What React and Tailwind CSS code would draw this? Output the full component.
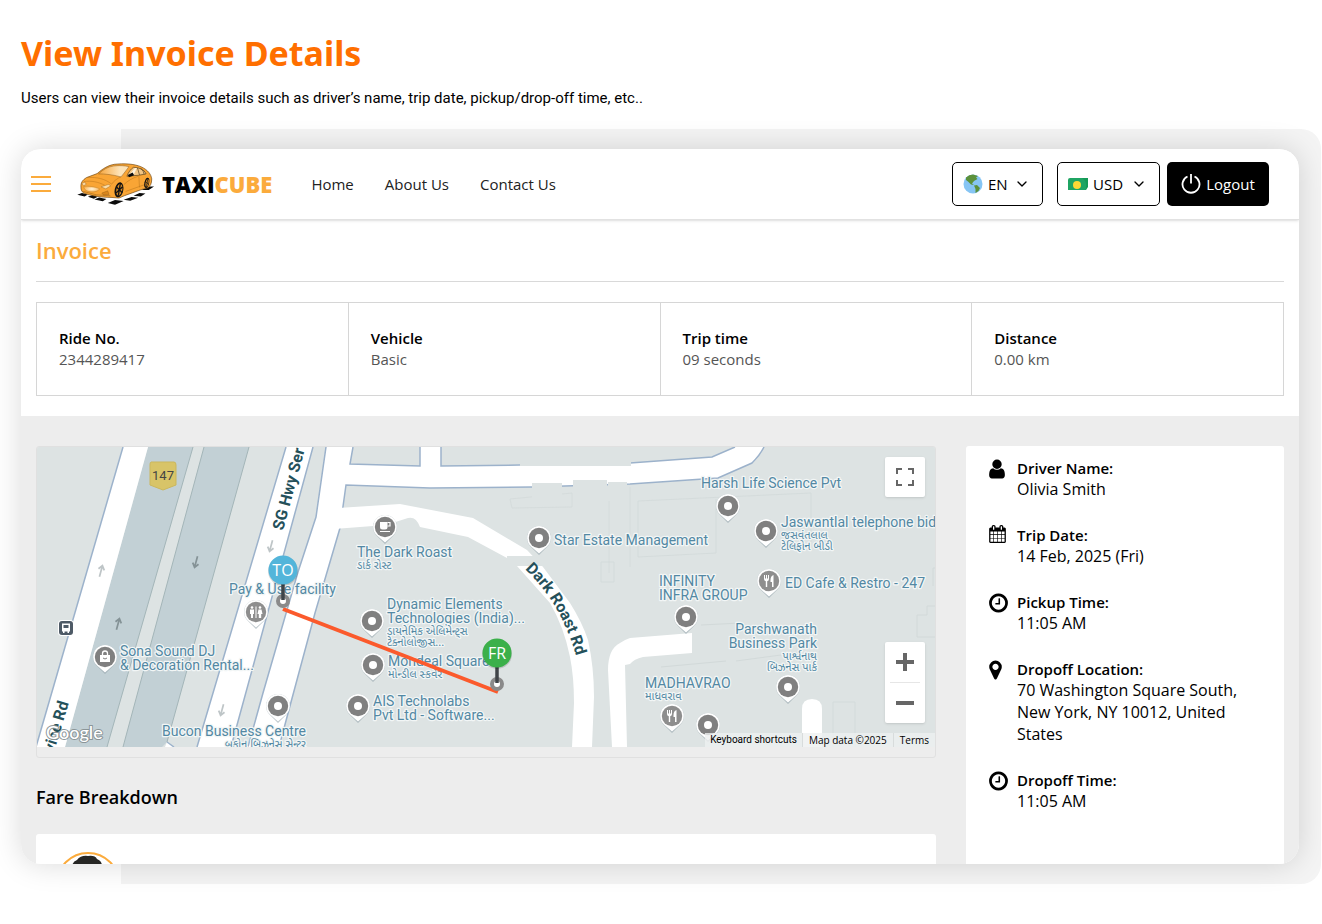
import React, { useState } from 'react';
import { ChevronDown } from 'lucide-react';

const rideFacts = [
  { label: 'Ride No.', value: '2344289417' },
  { label: 'Vehicle', value: 'Basic' },
  { label: 'Trip time', value: '09 seconds' },
  { label: 'Distance', value: '0.00 km' },
];

const icons = {
  user: {
    box: '256 0 1280 1792',
    className: 'h-[22px] w-4',
    d: 'M1536 1399q0 109-62.5 187t-150.5 78h-854q-88 0-150.5-78t-62.5-187q0-85 8.5-160.5t31.5-152 58.5-131 94-89 134.5-34.5q131 128 313 128t313-128q76 0 134.5 34.5t94 89 58.5 131 31.5 152 8.5 160.5zm-256-887q0 159-112.5 271.5t-271.5 112.5-271.5-112.5-112.5-271.5 112.5-271.5 271.5-112.5 271.5 112.5 112.5 271.5z',
  },
  calendar: {
    box: '64 0 1664 1792',
    className: 'h-[18px] w-[17px]',
    d: 'M192 1664h288v-288h-288v288zm352 0h320v-288h-320v288zm-352-352h288v-320h-288v320zm352 0h320v-320h-320v320zm-352-384h288v-288h-288v288zm736 736h320v-288h-320v288zm-384-736h320v-288h-320v288zm768 736h288v-288h-288v288zm-384-352h320v-320h-320v320zm-352-864v-288q0-13-9.5-22.5t-22.5-9.5h-64q-13 0-22.5 9.5t-9.5 22.5v288q0 13 9.5 22.5t22.5 9.5h64q13 0 22.5-9.5t9.5-22.5zm736 864h288v-320h-288v320zm-384-384h320v-288h-320v288zm384 0h288v-288h-288v288zm32-480v-288q0-13-9.5-22.5t-22.5-9.5h-64q-13 0-22.5 9.5t-9.5 22.5v288q0 13 9.5 22.5t22.5 9.5h64q13 0 22.5-9.5t9.5-22.5zm384-64v1280q0 52-38 90t-90 38h-1408q-52 0-90-38t-38-90v-1280q0-52 38-90t90-38h128v-96q0-66 47-113t113-47h64q66 0 113 47t47 113v96h384v-96q0-66 47-113t113-47h64q66 0 113 47t47 113v96h128q52 0 90 38t38 90z',
  },
  clock: {
    box: '128 0 1536 1792',
    className: 'h-[22px] w-[19px]',
    d: 'M1024 544v448q0 14-9 23t-23 9h-320q-14 0-23-9t-9-23v-64q0-14 9-23t23-9h224v-352q0-14 9-23t23-9h64q14 0 23 9t9 23zm416 352q0-148-73-273t-198-198-273-73-273 73-198 198-73 273 73 273 198 198 273 73 273-73 198-198 73-273zm224 0q0 209-103 385.5t-279.5 279.5-385.5 103-385.5-103-279.5-279.5-103-385.5 103-385.5 279.5-279.5 385.5-103 385.5 103 279.5 279.5 103 385.5z',
  },
  marker: {
    box: '256 0 1024 1792',
    className: 'h-[22px] w-[13px]',
    d: 'M1024 640q0 106-75 181t-181 75-181-75-75-181 75-181 181-75 181 75 75 181zm256 0q0 109-33 179l-364 774q-16 33-47.5 52t-67.5 19-67.5-19-46.500-52l-365-774q-33-70-33-179 0-212 150-362t362-150 362 150 150 362z',
  },
};

const tripDetails = [
  { icon: 'user', label: 'Driver Name:', value: 'Olivia Smith' },
  { icon: 'calendar', label: 'Trip Date:', value: '14 Feb, 2025 (Fri)' },
  { icon: 'clock', label: 'Pickup Time:', value: '11:05 AM' },
  { icon: 'marker', label: 'Dropoff Location:', value: '70 Washington Square South, New York, NY 10012, United States' },
  { icon: 'clock', label: 'Dropoff Time:', value: '11:05 AM' },
];

// Places on the map: pin position and label lines
const places = [
  { x: 349, y: 80, kind: 'cup', tx: 321, ty: 110, lines: ['The Dark Roast'], local: ['ડાર્ક રોસ્ટ'] },
  { x: 503, y: 91, tx: 518, ty: 98, lines: ['Star Estate Management'] },
  { x: 692, y: 59, tx: 665, ty: 41, lines: ['Harsh Life Science Pvt'] },
  { x: 730, y: 84, tx: 745, ty: 80, lines: ['Jaswantlal telephone bid'], local: ['જસવંતલાલ', 'ટેલિફોન બીડી'] },
  { x: 733, y: 134, kind: 'food', tx: 749, ty: 141, lines: ['ED Cafe & Restro - 247'] },
  { x: 650, y: 170, tx: 623, ty: 139, lines: ['INFINITY', 'INFRA GROUP'] },
  { x: 752, y: 240, tx: 781, ty: 187, end: true, lines: ['Parshwanath', 'Business Park'], local: ['પાર્શ્વનાથ', 'બિઝનેસ પાર્ક'] },
  { x: 636, y: 269, kind: 'food', tx: 609, ty: 241, lines: ['MADHAVRAO'], local: ['માધવરાવ'] },
  { x: 672, y: 278, lines: [] },
  { x: 336, y: 174, tx: 351, ty: 162, lines: ['Dynamic Elements', 'Technologies (India)...'], local: ['ડાયનેમિક એલિમેન્ટ્સ', 'ટેક્નોલોજીસ...'] },
  { x: 337, y: 218, tx: 352, ty: 219, lines: ['Mondeal Square'], local: ['મોન્ડીલ સ્કવેર'] },
  { x: 322, y: 259, tx: 337, ty: 259, lines: ['AIS Technolabs', 'Pvt Ltd - Software...'] },
  { x: 242, y: 259, tx: 270, ty: 289, end: true, lines: ['Bucon Business Centre'], local: ['બુકોન બિઝનેસ સેન્ટર'] },
  { x: 220, y: 165, kind: 'rest', tx: 193, ty: 147, lines: ['Pay & Use facility'] },
  { x: 69, y: 210, kind: 'bag', tx: 84, ty: 209, lines: ['Sona Sound DJ', '& Decoration Rental...'] },
];

const Pin = ({ x, y, kind }) => (
  <g transform={`translate(${x} ${y})`}>
    <path d="M0 17 L-8 9 A12 12 0 1 1 8 9 Z" fill="#8fa0a8" opacity="0.6" />
    <path d="M0 15.5 L-8 8.500 A11.800 11.800 0 1 1 8 8.500 Z" fill="#fff" />
    <circle r="10.200" fill={kind === 'rest' || kind === 'food' ? '#8e8e8e' : '#808080'} />
    {!kind && <circle r="4" fill="#fff" />}
    {kind === 'cup' && (
      <g>
        <path d="M-5-5H2.500V0Q2.500 2.500 0 2.500H-2.500Q-5 2.500-5 0Z" fill="#fff" />
        <path d="M2.500-4.500H5V-1H2.500M-5 4.500H5" fill="none" stroke="#fff" strokeWidth="1.200" />
      </g>
    )}
    {kind === 'food' && (
      <g fill="#fff">
        <path d="M-5-6v4q0 2 1.800 2.300V6h1.400V.3Q0 0 0-2V-6h-1v3.500h-1V-6h-1v3.500h-1V-6z" />
        <path d="M4.500-6Q1.500-5 1.500-1V1H3V6h1.500z" />
      </g>
    )}
    {kind === 'rest' && (
      <g fill="#fff">
        <circle cx="-4" cy="-4.500" r="1.300" />
        <circle cx="4" cy="-4.500" r="1.300" />
        <path d="M-6-2.500h4V2h-1v4h-2V2h-1zM2.500-2.500h3L6.500 2H5.200v4H2.800V2H1.500zM-.5-5.500h1V6h-1z" />
      </g>
    )}
    {kind === 'bag' && (
      <g>
        <path d="M-5-2H5V5H-5Z" fill="#fff" />
        <path d="M-2.500-2V-3.500A2.500 2.500 0 0 1 2.500-3.500V-2" fill="none" stroke="#fff" strokeWidth="1.300" />
        <path d="M-2 1Q0 3 2 1" fill="none" stroke="#808080" />
      </g>
    )}
  </g>
);

const Arrow = ({ x, y, down, faint }) => (
  <g transform={`translate(${x} ${y}) rotate(${down ? 195 : 15})`} opacity={faint ? 0.5 : 0.9}>
    <path d="M0 6V-5M-3-1.500L0-5.500L3-1.500" fill="none" stroke="#7d8b8f" strokeWidth="1.700" />
  </g>
);

const RouteStop = ({ x, y, color, text, ring }) => (
  <g>
    <circle cx={x} cy={ring} r="5" fill="#fff" stroke="#8a8a8a" strokeWidth="4" />
    <path d={`M${x} ${y + 12}V${ring - 1}`} stroke="#3f4448" strokeWidth="3.500" />
    <circle cx={x} cy={y + 1} r="15" fill="#000" opacity="0.15" />
    <circle cx={x} cy={y} r="14.500" fill={color} />
    <text x={x} y={y + 6} textAnchor="middle" className="fill-white font-['Open_Sans'] text-[16px]">{text}</text>
  </g>
);

const TripMap = () => (
  <svg viewBox="1 0 898 300" preserveAspectRatio="xMinYMin slice" className="block h-[300px] w-full" role="img" aria-label="Trip map">
    <rect width="1600" height="300" fill="#dde3e3" />

    {/* buildings */}
    <g fill="none" stroke="#d2d9d9">
      <path d="M602 54L775 46V95M602 54V110L680 106V52M565 115h13v20h-13zM797 255h22v45M797 255v45" opacity="0.8" />
      <path d="M665 178L705 176M625 220L690 214M700 214L745 208M900 121h-3v18M891 159h9M881 168h10v-9M881 168v22h19" />
      <path d="M474 52l62-6v14l-60 1zM573 40v86M594 40v80" opacity="0.7" />
    </g>

    {/* highway */}
    <path d="M112 0H157L71 300H29Z" fill="#c2d0d5" />
    <path d="M168 0H213L131 295L126 300H87Z" fill="#c2d0d5" />
    <path d="M157 0L71 300M168 0L87 300M213 0L131 295" fill="none" stroke="#a3b5b8" />
    <path d="M87 0H112L29 300H0Z" fill="#fff" />
    <path d="M87 0L0 300" stroke="#9cb2cb" strokeWidth="1.500" />
    <path d="M131 295L138 300H129Z" fill="#fff" />
    <path d="M131 295L138 300" stroke="#9cb2cb" strokeWidth="1.500" />

    {/* service roads */}
    <path d="M250 0H277L195 300H161Z" fill="#fff" />
    <path d="M250 0L161 300M277 0L195 300" stroke="#9cb2cb" strokeWidth="1.500" />
    <path d="M290 0L280 70L262 125L227 246L212 300H243L251 270L279 166L304 81L310 38L394 41L496 40L594 37L682 31L716 16Q724 8 728 0H699L676 10L594 16L484 18L405 19V0H384V19L314 17L317 0Z" fill="#fff" />
    <path d="M290 0L280 70L262 125L227 246L212 300M243 300L251 270L279 166L304 81L310 38L394 41L496 40L594 37L682 31L716 16Q724 8 728 0M699 0L676 10L594 16L484 18L405 19V0M384 0V19L314 17L317 0" fill="none" stroke="#9cb2cb" strokeWidth="1.500" />
    <path d="M302 61L364 57L437 71L491 103L507 120L534 156Q546 175 552 193Q558 220 558 250L556 300H536L538 256Q538 230 534 210Q528 180 514 156L481 119L471 111L432 90L384 80Q380 69 372 71L350 78L298 82Z" fill="#fff" />
    <path d="M576 300L572 223Q572 202 584 196Q588 193 594 191L656 186V206L607 210Q598 212 594 217L589 218L591 300Z" fill="#fff" />
    <path d="M766 300V262Q766 252 776 252T786 262V300Z" fill="#fff" />
    <path d="M484 0H595V19H484ZM496 36H526V54H496ZM537 33H571V54H537ZM572 35H591V54H572ZM471 109H507V119H471Z" fill="#dde3e3" />

    <Arrow x={65} y={124} faint />
    <Arrow x={82} y={177} />
    <Arrow x={160} y={115} down />
    <Arrow x={235} y={99} down faint />
    <Arrow x={186} y={263} down faint />

    {/* road names */}
    <g className="fill-[#24505a] font-['Roboto'] text-[16px] font-bold">
      <text transform="translate(247 84) rotate(-75)">SG Hwy Ser</text>
      <text transform="translate(33 256) rotate(-73)" textAnchor="end">Service Rd</text>
      <path id="dark-roast-rd" d="M489 122Q527 158 542 216" fill="none" />
      <text><textPath href="#dark-roast-rd">Dark Roast Rd</textPath></text>
    </g>

    {/* highway shield and bus stop */}
    <path d="M115 15H138Q140 15 140 18V38L127 43L114 38V18Q114 15 115 15Z" fill="#d8c468" stroke="#cbb75c" />
    <text x="127" y="33" textAnchor="middle" className="fill-[#444] font-['Roboto'] text-[13px]">147</text>
    <rect x="22" y="173" width="16" height="16" rx="4" fill="#fff" />
    <rect x="23" y="174" width="14" height="14" rx="3" fill="#4e5a66" />
    <path d="M26 176.500H34V184.500H33V186H31.500V184.500H28.500V186H27V184.500H26Z" fill="#fff" />
    <path d="M27.500 178H32.500V181H27.500Z" fill="#4e5a66" />

    {places.map((p) => (
      <g key={`${p.x}-${p.y}`}>
        <Pin x={p.x} y={p.y} kind={p.kind} />
        <g
          textAnchor={p.end ? 'end' : 'start'}
          stroke="#f2f6f6"
          strokeWidth="2.500"
          strokeLinejoin="round"
          paintOrder="stroke"
          className="fill-[#5388a3]"
        >
          {p.lines.map((line, i) => (
            <text key={line} x={p.tx} y={p.ty + i * 14} className="font-['Roboto'] text-[14px]">{line}</text>
          ))}
          {p.local?.map((line, i) => (
            <text key={line} x={p.tx} y={p.ty + p.lines.length * 14 - 2 + i * 11} className="font-['Noto_Sans_Gujarati','Noto_Sans',sans-serif] text-[11px]">{line}</text>
          ))}
        </g>
      </g>
    ))}

    <path d="M247 162L462 245" stroke="#fb5a2c" strokeWidth="4" />
    <RouteStop x={247} y={123} ring={154} color="#53b5da" text="TO" />
    <RouteStop x={461} y={206} ring={237} color="#3bb04a" text="FR" />

    <text x="10" y="292" fill="#fff" stroke="#8b9598" strokeWidth="2" paintOrder="stroke" className="font-['Lato'] text-[18px] font-medium">Google</text>
  </svg>
);

const CarLogo = () => (
  <svg viewBox="20 22 240 130" className="h-[43px] w-20" aria-hidden="true">
    <defs>
      <linearGradient id="windshield" x1="0" x2="1">
        <stop offset="0" stopColor="#f7a53a" />
        <stop offset="0.7" stopColor="#fde3b8" />
      </linearGradient>
      <radialGradient id="bumper">
        <stop offset="0" stopColor="#fff8e6" />
        <stop offset="1" stopColor="#f9b455" />
      </radialGradient>
    </defs>
    <path d="M20 118L34 113L52 117L42 123ZM72 132L86 126L108 131L97 138ZM112 143L134 134L160 137L134 148ZM160 133L184 125L204 127L180 136ZM190 121L208 113L226 114L212 123ZM214 104L236 93L252 93L236 104ZM52 124L66 119L82 124L70 130Z" fill="#0b0b0b" />
    <path d="M31 95C30 82 35 74 48 66L80 54C98 38 114 29 132 26C160 23 192 24 214 34C233 43 243 56 245 70C245 84 241 92 233 97L212 103L162 121L146 128L122 126C92 126 60 121 40 113C32 108 31 102 31 95Z" fill="#f9a535" stroke="#6a4310" strokeWidth="2" />
    <path d="M84 55C98 41 114 33 130 31C148 29 164 30 176 33C168 44 160 55 152 64C126 57 104 55 84 55Z" fill="url(#windshield)" stroke="#6a4310" strokeWidth="1.200" />
    <path d="M170 62C174 50 182 40 190 35C200 35 212 38 222 46L228 55L206 59Z" fill="#f3c685" stroke="#3a2a10" strokeWidth="1.800" />
    <path d="M178 57L194 37L200 37L190 59Z" fill="#fff3dc" />
    <path d="M202 37L208 58M212 38Q221 46 222 56" fill="none" stroke="#3a2a10" strokeWidth="1.800" />
    <path d="M173 58L187 51L192 59L176 65Z" fill="#0b0b0b" />
    <path d="M50 66C80 64 104 70 124 86C130 76 142 68 152 64M160 88C172 76 186 68 204 62M40 78C62 75 84 79 104 90M166 108L222 88M206 60L208 96" fill="none" stroke="#b8741a" strokeWidth="1.500" />
    <path d="M40 93C52 90 74 94 88 100C82 109 68 111 54 108C44 105 39 99 40 93Z" fill="url(#bumper)" stroke="#a56a1b" />
    <path d="M34 84L42 80L47 86L39 91ZM92 94L114 87L121 91L106 100Z" fill="#fbdca6" stroke="#7a4d14" />
    <path d="M94 113L112 106L116 117L99 119Z" fill="#d9861c" stroke="#7a4d14" />
    <path d="M38 108Q76 122 120 121" fill="none" stroke="#8a5714" strokeWidth="1.500" />
    <ellipse cx="146" cy="103" rx="13" ry="23" fill="#121212" transform="rotate(12 146 103)" />
    <ellipse cx="147" cy="103" rx="9" ry="18" fill="#d78a25" transform="rotate(12 147 103)" />
    <path d="M150 85L144 121M138 94L156 112M157 94L137 113" stroke="#121212" strokeWidth="4" />
    <ellipse cx="230" cy="82" rx="7" ry="16" fill="#121212" transform="rotate(12 230 82)" />
    <ellipse cx="231" cy="82" rx="4.500" ry="12" fill="#d78a25" transform="rotate(12 231 82)" />
    <path d="M233 70L229 94M226 78L236 87" stroke="#121212" strokeWidth="2" />
  </svg>
);

const GlobeIcon = () => (
  <svg viewBox="0 0 20 20" className="h-5 w-5 shrink-0" aria-hidden="true">
    <circle cx="10" cy="10" r="9.500" fill="#86c5f4" />
    <path d="M3 3.500Q6 .8 10 .6L15 2L13 3.500L14.500 5L11 7L9 9.500L11 11L8 10.500L5 7.500L3 6Z" fill="#5c913b" />
    <path d="M11 11.500L14 11L17 14L15.500 17L12.500 19L12.500 15Z" fill="#5c913b" />
  </svg>
);

const CashIcon = () => (
  <svg viewBox="0 0 20 12" className="h-3 w-5 shrink-0" aria-hidden="true">
    <path d="M2 0H20V9L18 12H2Z" fill="#159a57" />
    <path d="M0 2Q0 0 2 0H14Q18 3 18 6V12H0Z" fill="#1fa463" />
    <circle cx="9" cy="7" r="4" fill="#fdd835" />
  </svg>
);

const HeaderSelect = ({ id, label, icon, value, onChange, options, width }) => (
  <div className={`relative flex h-11 items-center rounded-[5px] border border-black pl-2.5 ${width}`}>
    <label htmlFor={id} className="sr-only">{label}</label>
    {icon}
    <select
      id={id}
      value={value}
      onChange={(e) => onChange(e.target.value)}
      className="h-full min-w-0 flex-1 appearance-none bg-transparent pl-[5px] font-medium text-black outline-none"
    >
      {options.map((o) => <option key={o}>{o}</option>)}
    </select>
    <ChevronDown className="pointer-events-none absolute right-3 h-4 w-4" />
  </div>
);

const Header = () => {
  const [lang, setLang] = useState('EN');
  const [currency, setCurrency] = useState('USD');

  return (
    <header className="flex h-[71px] items-center border-b border-[#e2e2e2] bg-white pr-[30px] pl-2.5 text-[15px] shadow-sm">
      <button type="button" aria-label="Menu" className="flex w-5 flex-col gap-[5px]">
        <span className="h-0.5 bg-[#fbab3c]" />
        <span className="h-0.5 bg-[#fbab3c]" />
        <span className="h-0.5 bg-[#fbab3c]" />
      </button>
      <a href="#home" className="ml-[26px] flex items-center gap-[5px]">
        <CarLogo />
        <span className="text-[22px] leading-8 font-extrabold text-black">TAXI<span className="text-[#fbab3c]">CUBE</span></span>
      </a>
      <nav className="ml-[39px] flex gap-[31px] font-medium text-[#222]">
        <a href="#home">Home</a>
        <a href="#about">About Us</a>
        <a href="#contact">Contact Us</a>
      </nav>
      <div className="ml-auto flex items-center">
        <HeaderSelect id="lang" label="Language" icon={<GlobeIcon />} value={lang} onChange={setLang} options={['EN', 'FR']} width="w-[91px]" />
        <div className="ml-3.5">
          <HeaderSelect id="currency" label="Currency" icon={<CashIcon />} value={currency} onChange={setCurrency} options={['USD', 'EUR']} width="w-[103px]" />
        </div>
        <button type="button" className="ml-[7px] flex h-11 w-[102px] items-center justify-center gap-[5px] rounded-[5px] bg-black font-medium text-white">
          <svg viewBox="0 0 20 20" className="h-5 w-5" fill="none" stroke="currentColor" strokeWidth="1.800" aria-hidden="true">
            <path d="M6.500 2.500A8.500 8.500 0 1 0 13.500 2.500M10 0V9.500" />
          </svg>
          Logout
        </button>
      </div>
    </header>
  );
};

const DetailIcon = ({ name }) => {
  const { box, d, className } = icons[name];
  return (
    <svg viewBox={box} className={className} fill="currentColor" fillRule="evenodd" aria-hidden="true">
      <path d={d} />
    </svg>
  );
};

export default function App() {
  return (
    <div className="bg-white pt-8 pr-px pb-10 pl-[21px] font-['Open_Sans',sans-serif] text-black">
      <h1 className="font-['Noto_Sans',sans-serif] text-[34px] leading-[42px] font-bold text-[#ff6f00]">View Invoice Details</h1>
      <p className="mt-3 font-['Roboto',sans-serif] text-[15px] leading-6">
        Users can view their invoice details such as driver&rsquo;s name, trip date, pickup/drop-off time, etc..
      </p>

      <div className="mt-[19px] grid">
        <div className="col-start-1 row-start-1 ml-[100px] rounded-r-[20px] bg-[#f4f4f4]" />
        <main className="z-10 col-start-1 row-start-1 my-5 mr-[22px] overflow-hidden rounded-[20px] bg-white shadow-[0_0_30px_rgba(0,0,0,0.15)]">
          <Header />

          <section className="px-[15px] pb-5">
            <h2 className="border-b border-[#d9d9d9] pt-3.5 pb-[15px] text-[22px] leading-8 font-semibold text-[#fbab3c]">Invoice</h2>
            <dl className="mt-5 grid grid-cols-4 border-y border-r border-[#d6d6d6] text-[15px] leading-[21px]">
              {rideFacts.map((f) => (
                <div key={f.label} className="border-l border-[#d6d6d6] px-[22px] py-[25px]">
                  <dt className="font-semibold">{f.label}</dt>
                  <dd className="text-[#555]">{f.value}</dd>
                </div>
              ))}
            </dl>
          </section>

          <section className="grid grid-cols-[minmax(0,1fr)_318px] gap-[30px] bg-[#ededed] px-[15px] pt-[30px]">
            <div>
              <div className="relative overflow-hidden rounded-[3px] border border-[#e0e0e0] pb-2.5">
                <TripMap />
                <button type="button" aria-label="Toggle fullscreen view" className="absolute top-2.5 right-2.5 flex h-10 w-10 items-center justify-center rounded-[2px] bg-white shadow">
                  <svg viewBox="0 0 18 18" className="h-[18px] w-[18px]" fill="none" stroke="#666" strokeWidth="2">
                    <path d="M1 6V1H6M12 1H17V6M17 12V17H12M6 17H1V12" />
                  </svg>
                </button>
                <div className="absolute right-2.5 bottom-[34px] w-10 rounded-[2px] bg-white shadow">
                  <button type="button" aria-label="Zoom in" className="flex h-10 w-10 items-center justify-center">
                    <svg viewBox="0 0 18 18" className="h-[18px] w-[18px]" stroke="#666" strokeWidth="4"><path d="M0 9H18M9 0V18" /></svg>
                  </button>
                  <div className="mx-[5px] h-px bg-[#e6e6e6]" />
                  <button type="button" aria-label="Zoom out" className="flex h-10 w-10 items-center justify-center">
                    <svg viewBox="0 0 18 18" className="h-[18px] w-[18px]" stroke="#666" strokeWidth="4"><path d="M0 9H18" /></svg>
                  </button>
                </div>
                <div className="absolute right-0 bottom-2.5 flex divide-x divide-[#d8dcdc] bg-[#eef0f0]/80 text-[10px] leading-[14px]">
                  <button type="button" className="px-[5px] font-['Roboto']">Keyboard shortcuts</button>
                  <span className="px-1.5">Map data ©2025</span>
                  <a href="#terms" className="px-1.5">Terms</a>
                </div>
              </div>

              <h3 className="mt-[25px] text-[18px] leading-7 font-semibold">Fare Breakdown</h3>
              <div className="mt-[23px] h-[30px] overflow-hidden rounded-t-[3px] bg-white pt-[18px] pl-5">
                <svg viewBox="0 0 64 64" className="h-16 w-16" role="img" aria-label="Driver photo">
                  <circle cx="32" cy="32" r="31" fill="#fff" stroke="#fbab3c" strokeWidth="2" />
                  <path d="M16 14Q17 9 21 8Q25 3 32 4Q39 3 41 7Q46 9 46 14L48 40H15Z" fill="#262624" />
                </svg>
              </div>
            </div>

            <aside className="rounded-t-[3px] bg-white px-[23px] pt-3">
              <ul className="space-y-[25px]">
                {tripDetails.map((t) => (
                  <li key={t.label} className="flex">
                    <div className="w-7 shrink-0">
                      <DetailIcon name={t.icon} />
                    </div>
                    <div>
                      <div className="text-[15px] leading-5 font-semibold">{t.label}</div>
                      <div className="leading-[22px]">{t.value}</div>
                    </div>
                  </li>
                ))}
              </ul>
            </aside>
          </section>
        </main>
      </div>
    </div>
  );
}
